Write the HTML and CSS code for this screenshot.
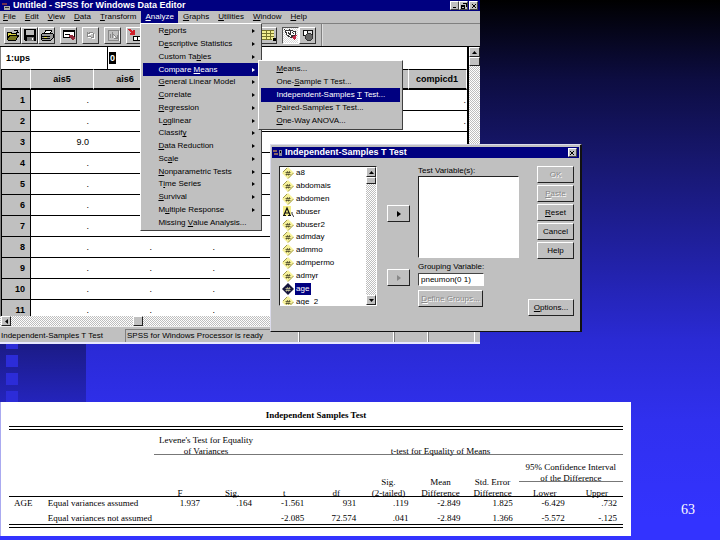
FILE: index.html
```
<!DOCTYPE html>
<html lang="en">
<head>
<meta charset="utf-8">
<title>Independent-Samples T Test</title>
<link rel="stylesheet" href="styles.css">
</head>
<body>
<svg width="0" height="0" class="defs" aria-hidden="true">
  <symbol id="num" viewBox="0 0 12 12"><path d="M6 0L12 6L6 12L0 6Z" fill="#f7f29a"/><path d="M6 11.500L11.500 6M5 1L1 5" stroke="#a09a50" fill="none"/><path d="M5.500 4L4.500 8.500M7.500 4L6.500 8.500M3.500 5.500H8.500M3.500 7.500H8.500" stroke="#3c3a20" stroke-width=".7" fill="none"/></symbol>
  <symbol id="str" viewBox="0 0 12 12"><path d="M1 0H9V10H1Z" fill="#f4ee86"/><path d="M2 9L5 2L8 9M3 7H7M1 9.500H4M6 9.500H9" stroke="#111" stroke-width="1.200" fill="none"/><path d="M10 6V8L12 11" stroke="#333" fill="none"/></symbol>
  <symbol id="sel" viewBox="0 0 12 12"><path d="M6 0L12 6L6 12L0 6Z" fill="#16163c"/><path d="M5.500 4L4.500 8.500M7.500 4L6.500 8.500M3.500 5.500H8.500M3.500 7.500H8.500" stroke="#d8d8a0" stroke-width=".7" fill="none"/></symbol>
</svg>
<main class="slide">
  <section class="editor">
    <header class="titlebar">
      <svg class="appicon" viewBox="0 0 8 8"><path d="M0 1H5V3H0Z" fill="#703050"/><path d="M2 4H8V8H2Z" fill="#aaa"/><path d="M3 5H7V6H3Z" fill="#333"/></svg>
      <h1>Untitled - SPSS for Windows Data Editor</h1>
      <button class="winbtn" aria-label="Minimize"><svg viewBox="0 0 6 6"><path d="M1 4H4V5H1Z"/></svg></button>
      <button class="winbtn" aria-label="Restore"><svg viewBox="0 0 6 6"><path d="M2 0H6V4H5V1H2ZM0 2H4V6H0ZM1 4V5H3V4Z" fill-rule="evenodd"/></svg></button>
      <button class="winbtn last" aria-label="Close"><svg viewBox="0 0 6 6"><path d="M1 1L5 5M5 1L1 5" stroke="#000"/></svg></button>
    </header>
    <nav class="menubar">
      <button><u>F</u>ile</button><button><u>E</u>dit</button><button><u>V</u>iew</button><button><u>D</u>ata</button><button><u>T</u>ransform</button>
      <div class="menuhost">
        <button class="open"><u>A</u>nalyze</button>
        <div class="menu">
          <button class="more">R<u>e</u>ports</button>
          <button class="more">D<u>e</u>scriptive Statistics</button>
          <button class="more">Custom Ta<u>b</u>les</button>
          <button class="more on">Compare <u>M</u>eans</button>
          <button class="more"><u>G</u>eneral Linear Model</button>
          <button class="more"><u>C</u>orrelate</button>
          <button class="more"><u>R</u>egression</button>
          <button class="more">L<u>o</u>glinear</button>
          <button class="more">Classif<u>y</u></button>
          <button class="more"><u>D</u>ata Reduction</button>
          <button class="more">Sc<u>a</u>le</button>
          <button class="more"><u>N</u>onparametric Tests</button>
          <button class="more">T<u>i</u>me Series</button>
          <button class="more"><u>S</u>urvival</button>
          <button class="more">M<u>u</u>ltiple Response</button>
          <button>Missing <u>V</u>alue Analysis...</button>
          <div class="menu sub">
            <button><u>M</u>eans...</button>
            <button>One-<u>S</u>ample T Test...</button>
            <button class="on">Independent-Samples <u>T</u> Test...</button>
            <button><u>P</u>aired-Samples T Test...</button>
            <button><u>O</u>ne-Way ANOVA...</button>
          </div>
        </div>
      </div>
      <button><u>G</u>raphs</button><button><u>U</u>tilities</button><button><u>W</u>indow</button><button><u>H</u>elp</button>
    </nav>
    <div class="toolbar">
      <div class="tools">
        <button aria-label="Open"><svg viewBox="0 0 14 12"><path d="M1 3H5L6 4H10V6H4L2 10H1Z" fill="#d8d040"/><path d="M4 6H13L10 11H1Z" fill="#77751e"/><path d="M1 11V3H5V4H10V6M2 11H10L13 6H4L1 11M8 1H11L12 3M10 3H13" fill="none" stroke="#000"/></svg></button>
        <button aria-label="Save"><svg viewBox="0 0 14 12"><path d="M1 0H13V12H2L1 11Z"/><path d="M3 1H11V6H3Z" fill="#bbb"/><path d="M4 8H11V12H4Z" fill="#777"/><path d="M9 9H10V11H9Z" fill="#fff"/></svg></button>
        <button aria-label="Print"><svg viewBox="0 0 14 12"><path d="M4 5L6 1H12L10 5" fill="#fff" stroke="#000"/><path d="M1 6L3 4H12L13 5V9L11 11H2L1 10Z" fill="#999" stroke="#000"/><path d="M2 7H10M2 9H10" stroke="#000"/><path d="M4 8H7" stroke="#e0d840"/></svg></button>
      </div>
      <div class="tools"><button aria-label="Dialog recall"><svg viewBox="0 0 14 12"><path d="M1 1H12V8H1Z" fill="#fff" stroke="#000"/><path d="M1 1H12V3H1Z"/><path d="M3 5H8" stroke="#000"/><path d="M7 6H10L13 9L11 12L8 9Z" fill="#902838"/></svg></button></div>
      <div class="tools"><button aria-label="Undo"><svg viewBox="0 0 14 12"><path d="M3 3V7H7M3 7C5 2 10 3 10 6C10 9 8 9 7 9" fill="none" stroke="#fff" transform="translate(1 1)"/><path d="M3 3V7H7M3 7C5 2 10 3 10 6C10 9 8 9 7 9" fill="none" stroke="#888"/></svg></button></div>
      <div class="tools"><button aria-label="Go to chart"><svg viewBox="0 0 14 12"><path d="M2 1H12V11H2Z" fill="none" stroke="#888"/><path d="M3 12H13V2M4 9V6M6 9V4M8 9V6L11 9V6" fill="none" stroke="#fff"/><path d="M4 9V5M6 9V3M7 5L11 9H8M11 9V6" fill="none" stroke="#888"/></svg></button></div>
      <div class="tools"><button aria-label="Go to case"><svg viewBox="0 0 14 12"><path d="M1 0L6 5M6 1V5H2" fill="none" stroke="#d0202c" stroke-width="2"/><path d="M5 7H14V11H5ZM9 7V11" fill="#fff" stroke="#000"/></svg></button></div>
      <div class="tools later"><button aria-label="Select cases"><svg viewBox="0 0 14 12"><path d="M0 1H12V11H0Z" fill="#f2ef92"/><path d="M0 1H12M0 4H12M0 7H12M0 10H10M4 1V11M8 1V11" stroke="#77752c" fill="none"/><path d="M11 9H14V12H11Z"/></svg></button></div>
      <div class="tools"><button class="down" aria-label="Value labels"><svg viewBox="0 0 14 12"><path d="M1 1L6 2L9 6L7 9L3 6Z" fill="#fff" stroke="#333"/><path d="M6 1L12 3L11 7L7 6Z" fill="#fff" stroke="#333"/><path d="M4 3L6 6M8 3L10 5" stroke="#333"/><path d="M9 7L13 6L11 11L8 9Z" fill="#c02c48"/></svg></button><button aria-label="Use sets"><svg viewBox="0 0 14 12"><circle cx="5" cy="4" r="3" fill="#fff" stroke="#111"/><circle cx="9" cy="4" r="3" fill="#ddd" stroke="#111"/><circle cx="8" cy="8" r="3.500" fill="#666" stroke="#333"/></svg></button></div>
      <span class="toolend"></span>
    </div>
    <div class="work">
      <div class="sheet">
        <div class="cellbar"><label for="cell">1:ups</label><input id="cell" value="0"></div>
        <div class="gridbox">
        <table class="grid">
          <thead><tr><th class="rh"></th><th>ais5</th><th>ais6</th><th></th><th></th><th></th><th></th><th class="lastcol">compicd1</th></tr></thead>
          <tbody>
            <tr><th>1</th><td>.</td><td></td><td></td><td></td><td></td><td></td><td class="lastcol">.</td></tr>
            <tr><th>2</th><td>.</td><td></td><td></td><td></td><td></td><td></td><td class="lastcol">.</td></tr>
            <tr><th>3</th><td>9.0</td><td></td><td></td><td></td><td></td><td></td><td class="lastcol"></td></tr>
            <tr><th>4</th><td>.</td><td></td><td></td><td></td><td></td><td></td><td class="lastcol"></td></tr>
            <tr><th>5</th><td>.</td><td></td><td></td><td></td><td></td><td></td><td class="lastcol"></td></tr>
            <tr><th>6</th><td>.</td><td></td><td></td><td></td><td></td><td></td><td class="lastcol"></td></tr>
            <tr><th>7</th><td>.</td><td></td><td></td><td></td><td></td><td></td><td class="lastcol"></td></tr>
            <tr><th>8</th><td>.</td><td>.</td><td>.</td><td></td><td></td><td></td><td class="lastcol"></td></tr>
            <tr><th>9</th><td>.</td><td>.</td><td>.</td><td></td><td></td><td></td><td class="lastcol"></td></tr>
            <tr><th>10</th><td>.</td><td>.</td><td>.</td><td></td><td></td><td></td><td class="lastcol"></td></tr>
            <tr><th>11</th><td>.</td><td>.</td><td>.</td><td></td><td></td><td></td><td class="lastcol"></td></tr>
          </tbody>
        </table>
        </div>
      </div>
      <div class="vscroll"><button aria-label="Scroll up"><svg viewBox="0 0 5 3"><path d="M0 3L2.500 0L5 3Z"/></svg></button><span class="thumb"></span></div>
    </div>
    <div class="hscroll"><button aria-label="Scroll left"><svg viewBox="0 0 5 5"><path d="M4 0V5L1 2.500Z"/></svg></button><span class="thumb"></span></div>
    <footer class="status"><span class="s1">Independent-Samples T Test</span><span class="s2">SPSS for Windows Processor is ready</span><span class="s3"></span><span class="s4"></span><span class="s5"></span></footer>
  </section>

  <section class="dialog">
    <header class="titlebar">
      <svg class="appicon" viewBox="0 0 10 8"><path d="M0 1H4V3H0ZM1 4H5V6H1Z" fill="#8a6262"/><path d="M6 1H9V7H6Z" fill="#889"/><path d="M7 2H8V4H7Z"/></svg>
      <h2>Independent-Samples T Test</h2>
      <button class="winbtn last" aria-label="Close dialog"><svg viewBox="0 0 6 6"><path d="M1 1L5 5M5 1L1 5" stroke="#000"/></svg></button>
    </header>
    <div class="dbody">
      <div class="varlist">
        <ul>
          <li><svg><use href="#num"/></svg><span>a8</span></li>
          <li><svg><use href="#num"/></svg><span>abdomais</span></li>
          <li><svg><use href="#num"/></svg><span>abdomen</span></li>
          <li><svg><use href="#str"/></svg><span>abuser</span></li>
          <li><svg><use href="#num"/></svg><span>abuser2</span></li>
          <li><svg><use href="#num"/></svg><span>admday</span></li>
          <li><svg><use href="#num"/></svg><span>admmo</span></li>
          <li><svg><use href="#num"/></svg><span>admpermo</span></li>
          <li><svg><use href="#num"/></svg><span>admyr</span></li>
          <li class="picked"><svg><use href="#sel"/></svg><span>age</span></li>
          <li><svg><use href="#num"/></svg><span>age_2</span></li>
        </ul>
        <div class="vscroll"><button aria-label="List up"><svg viewBox="0 0 5 3"><path d="M0 3L2.500 0L5 3Z"/></svg></button><span class="thumb"></span><button class="end" aria-label="List down"><svg viewBox="0 0 5 3"><path d="M0 0L2.500 3L5 0Z"/></svg></button></div>
      </div>
      <div class="movers">
        <button class="btn" aria-label="Add test variable"><svg viewBox="0 0 4 6"><path d="M0 0L4 3L0 6Z"/></svg></button>
        <button class="btn" disabled aria-label="Add grouping variable"><svg viewBox="0 0 4 6"><path d="M0 0L4 3L0 6Z" fill="#888"/></svg></button>
      </div>
      <div class="fields">
        <label for="tv">Test Variable(s):</label>
        <textarea id="tv"></textarea>
        <label for="gv">Grouping Variable:</label>
        <input id="gv" value="pneumon(0 1)">
        <button class="btn" disabled><u>D</u>efine Groups...</button>
      </div>
      <div class="actions">
        <button class="btn" disabled>OK</button>
        <button class="btn" disabled><u>P</u>aste</button>
        <button class="btn"><u>R</u>eset</button>
        <button class="btn">Cancel</button>
        <button class="btn">Help</button>
        <button class="btn options"><u>O</u>ptions...</button>
      </div>
    </div>
  </section>

  <div class="band"><i></i><i></i><i></i><i></i></div>

  <section class="output">
    <h2>Independent Samples Test</h2>
    <table class="results">
      <colgroup><col class="c1"><col class="c2"><col><col><col><col><col><col><col><col><col></colgroup>
      <thead>
        <tr class="ra"><th colspan="2"></th><th colspan="2" class="rule"><span>Levene's Test for Equality<br>of Variances</span></th><th colspan="7" class="rule"><span>t-test for Equality of Means</span></th></tr>
        <tr class="rb"><th rowspan="2" colspan="2"></th><th rowspan="2"><span>F</span></th><th rowspan="2"><span>Sig.</span></th><th rowspan="2"><span>t</span></th><th rowspan="2"><span>df</span></th><th rowspan="2"><span>Sig.<br>(2-tailed)</span></th><th rowspan="2"><span>Mean<br>Difference</span></th><th rowspan="2"><span>Std. Error<br>Difference</span></th><th colspan="2" class="rule"><span>95% Confidence Interval<br>of the Difference</span></th></tr>
        <tr class="rc"><th><span>Lower</span></th><th><span>Upper</span></th></tr>
      </thead>
      <tbody>
        <tr class="r1"><td class="l first">AGE</td><td class="l">Equal variances assumed</td><td>1.937</td><td>.164</td><td>-1.561</td><td>931</td><td>.119</td><td>-2.849</td><td>1.825</td><td>-6.429</td><td>.732</td></tr>
        <tr><td class="l"></td><td class="l">Equal variances not assumed</td><td></td><td></td><td>-2.085</td><td>72.574</td><td>.041</td><td>-2.849</td><td>1.366</td><td>-5.572</td><td>-.125</td></tr>
      </tbody>
    </table>
  </section>
  <span class="page">63</span>
</main>
</body>
</html>
```
FILE: styles.css
```
* { box-sizing: border-box; }
body { margin: 0; font: 8px/12px "Liberation Sans", Arial, sans-serif; color: #000; }
button, input, textarea { font: inherit; color: inherit; margin: 0; padding: 0; border: 0; border-radius: 0; background: none; white-space: nowrap; }
button { display: flex; align-items: center; justify-content: center; white-space: pre; }
h1, h2 { margin: 0; }
.defs { position: absolute; }

.slide {
  position: relative;
  min-height: 100vh;
  background: linear-gradient(#000 0, #0d0d42 80px, #17176e 160px, #2020a0 250px, #2a2ad4 340px, #3030ee 420px, #3333ff 520px);
}

/* data editor window */
.editor { width: 66.667%; background: #c0c0c0; }
.titlebar { display: flex; align-items: center; height: 11px; background: #000080; color: #fff; }
.titlebar h1, .titlebar h2 { flex: 1; font-size: 9px; line-height: 11px; font-weight: bold; white-space: nowrap; }
.appicon { width: 10px; height: 8px; margin: 0 2px 0 1px; }
.winbtn { width: 9px; height: 9px; background: #c0c0c0; border: 1px solid; border-color: #fff #444 #444 #fff; }
.winbtn.last { margin: 0 2px 0 1px; }
.winbtn svg { width: 6px; height: 6px; flex: none; }

.menubar { display: flex; gap: 1px; height: 13px; margin-left: -1px; border-bottom: 1px solid #808080; }
.menubar > button, .menuhost > button { padding: 0 4px; height: 12px; }
.menuhost { position: relative; }
.menuhost > .open { background: #000080; color: #fff; }
.menu {
  position: absolute; z-index: 3; top: 12px; left: -1px; width: 122px; height: 208px; padding: 1px 2px;
  display: flex; flex-direction: column; background: #c0c0c0;
  border: 1px solid; border-color: #fff #404040 #404040 #fff;
}
.menu button { flex: 1; min-height: 0; justify-content: flex-start; padding-left: 15px; position: relative; }
.menu .on { background: #000080; color: #fff; }
.menu .more::after { content: ""; margin-left: auto; margin-right: 4px; border: 2px solid transparent; border-left: 3px solid; border-right: 0; }
.menu.sub { top: 36px; left: 117px; width: 145px; height: 70px; }

.toolbar { display: flex; align-items: center; height: 22px; padding-left: 4px; gap: 5px; }
.tools { display: flex; }
.tools button { width: 17px; height: 17px; border: 1px solid; border-color: #fff #333 #333 #fff; }
.tools svg { width: 14px; height: 12px; shape-rendering: crispEdges; }
.tools .down { border-color: #555 #fff #fff #555; background: repeating-conic-gradient(#fff 0 25%, #d8d8d8 0 50%) 0 0 / 2px 2px; }
.later { margin-left: 112px; }
.toolend { align-self: stretch; width: 2px; border-left: 1px solid #808080; border-right: 1px solid #ddd; }

.work { display: flex; height: 270px; border-top: 1px solid #000; }
.sheet { flex: 1; min-width: 0; display: flex; flex-direction: column; border-left: 1px solid #808080; border-right: 2px solid #000; background: #fff; }
.cellbar { display: flex; align-items: center; height: 22px; font-size: 9px; font-weight: bold; }
.cellbar label { width: 107px; padding-left: 5px; line-height: 22px; border-right: 1px solid #000; }
.cellbar input { width: 7px; height: 12px; margin: 0 0 0 1px; padding-left: 1px; background: #000; color: #fff; }
.gridbox { flex: 1; min-height: 0; overflow: hidden; border-left: 1px solid #000; }
.grid { width: 100%; table-layout: fixed; border-collapse: separate; border-spacing: 0; font-size: 9px; line-height: 18px; }
.grid th, .grid td { width: 63px; height: 21px; padding: 0; border-bottom: 1px solid #000; }
.grid thead th { background: #c0c0c0; border-top: 1px solid #000; border-bottom-width: 2px; border-right: 1px solid #fff; padding-right: 0; }
.grid .rh { width: 29px; }
.grid tbody th { background: #c0c0c0; border-right: 1px solid #000; text-align: right; padding-right: 5px; }
.grid td { text-align: right; padding-right: 5px; }
.grid .lastcol { width: auto; padding-right: 1px; }

.vscroll, .hscroll { background: repeating-conic-gradient(#fff 0 25%, #bdbdbd 0 50%) 0 0 / 2px 2px; display: flex; }
.vscroll { width: 11px; flex-direction: column; }
.vscroll button, .vscroll .thumb, .hscroll button, .hscroll .thumb { flex: none; background: #c0c0c0; border: 1px solid; border-color: #fff #222 #222 #fff; }
.vscroll button { width: 100%; height: 10px; }
.vscroll .thumb { height: 9px; }
.vscroll svg { width: 5px; height: 3px; }
.vscroll .end { margin-top: auto; }
.hscroll { height: 10px; padding-left: 1px; }
.hscroll button, .hscroll .thumb { width: 10px; height: 10px; }
.hscroll svg { width: 5px; height: 5px; }
.hscroll .thumb { margin-left: 122px; }

.status { display: flex; height: 18px; padding: 2px 0; border-top: 1px solid #eee; border-bottom: 2px solid #e8e8ff; white-space: nowrap; }
.status span { border-top: 1px solid #808080; border-left: 1px solid #808080; border-right: 1px solid #fff; height: 13px; }
.status .s1 { width: 125px; border-color: transparent; }
.status .s2 { width: 174px; padding-left: 1px; }
.status .s3 { width: 95px; }
.status .s4 { width: 34px; }
.status .s5 { flex: 1; margin-right: 5px; }

/* t-test dialog */
.dialog {
  position: absolute; z-index: 4; top: 144px; left: 37.500%; width: 43.333%; height: 188px; padding: 2px 1px;
  display: flex; flex-direction: column; background: #c0c0c0;
  border: 1px solid; border-color: #dcdcec #111 #111 #dcdcec; border-right-width: 2px;
}
.dbody { flex: 1; display: flex; padding: 8px 5px 13px 7px; }
.varlist { flex: none; display: flex; width: 98px; height: 140px; overflow: hidden; background: #fff; border: 1px solid; border-color: #222 #fff #fff #222; }
.varlist ul { flex: 1; height: 141px; margin: 0; padding: 0; list-style: none; display: flex; flex-direction: column; }
.varlist li { flex: 1; display: flex; align-items: center; padding-left: 2px; gap: 1px; }
.varlist li svg { width: 12px; height: 12px; }
.varlist li span { padding: 0 2px 0 1px; }
.picked span { background: #000080; color: #fff; }
.varlist .vscroll { width: 10px; height: 138px; }
.varlist .vscroll .thumb { height: 7px; }

.btn { flex: none; height: 17px; border: 1px solid; border-color: #fff #222 #222 #fff; background: #c0c0c0; }
.btn:disabled { color: #888; text-shadow: 1px 1px #fff; }
.movers { display: flex; flex-direction: column; gap: 47px; padding: 39px 8px 0 10px; }
.movers .btn { width: 23px; }
.movers svg { width: 4px; height: 6px; }
.fields { display: flex; flex-direction: column; align-items: flex-start; width: 101px; }
.fields label { line-height: 10px; white-space: nowrap; }
.fields textarea { width: 100%; height: 82px; margin-bottom: 4px; resize: none; background: #fff; border: 1px solid; border-color: #222 #fff #fff #222; }
.fields input { width: 66px; height: 13px; margin: 1px 0 4px; padding-left: 2px; background: #fff; border: 1px solid; border-color: #444 #fff #fff #444; }
.fields .btn { width: 65px; }
.actions { flex: 1; display: flex; flex-direction: column; align-items: flex-end; gap: 2px; }
.actions .btn { width: 37px; }
.actions .options { width: 46px; margin-top: auto; }

/* slide decoration */
.band { display: flex; flex-direction: column; gap: 6px; width: 86px; height: 58px; padding-left: 6px; overflow: hidden; background: linear-gradient(#1b1b86, #2424bc); }
.band i { flex: none; width: 12px; height: 12px; background: #2c2cd8; }
.band i:first-child { height: 5px; }
.page { position: absolute; right: 25px; bottom: 22px; font: 14px/16px "Liberation Serif", serif; color: #fff; }

/* results */
.output { width: 87.640%; padding: 7px 8px 8px; background: #fff; border-left: 1px solid #aaaaf0; font: 9px/12px "Liberation Serif", "Times New Roman", serif; }
.output h2 { font-size: 9px; line-height: 12px; margin-bottom: 5px; text-align: center; }
.results { width: 100%; table-layout: fixed; border-collapse: separate; border-spacing: 0; border-top: 4px double #000; border-bottom: 4px double #000; }
.results .c1 { width: 6.300%; }
.results .c2 { width: 17.300%; }
.results th { padding: 0; font-weight: normal; vertical-align: bottom; line-height: 11px; white-space: nowrap; }
.results th span { display: block; margin-bottom: -3px; }
.results .ra th { height: 25px; }
.results .rb th { height: 27px; }
.results .rc th { height: 15px; }
.results .rule { border-bottom: 1px solid #777; }
.results .rc th, .results .rb th[rowspan] { border-bottom: 1px solid #000; }
.results td { height: 12px; padding: 0 6px 0 0; text-align: right; vertical-align: top; white-space: nowrap; line-height: 12px; }
.results .r1 td { height: 15px; }
.results td.l { text-align: left; padding: 0; }
.results td.first { padding-left: 5px; }
```
